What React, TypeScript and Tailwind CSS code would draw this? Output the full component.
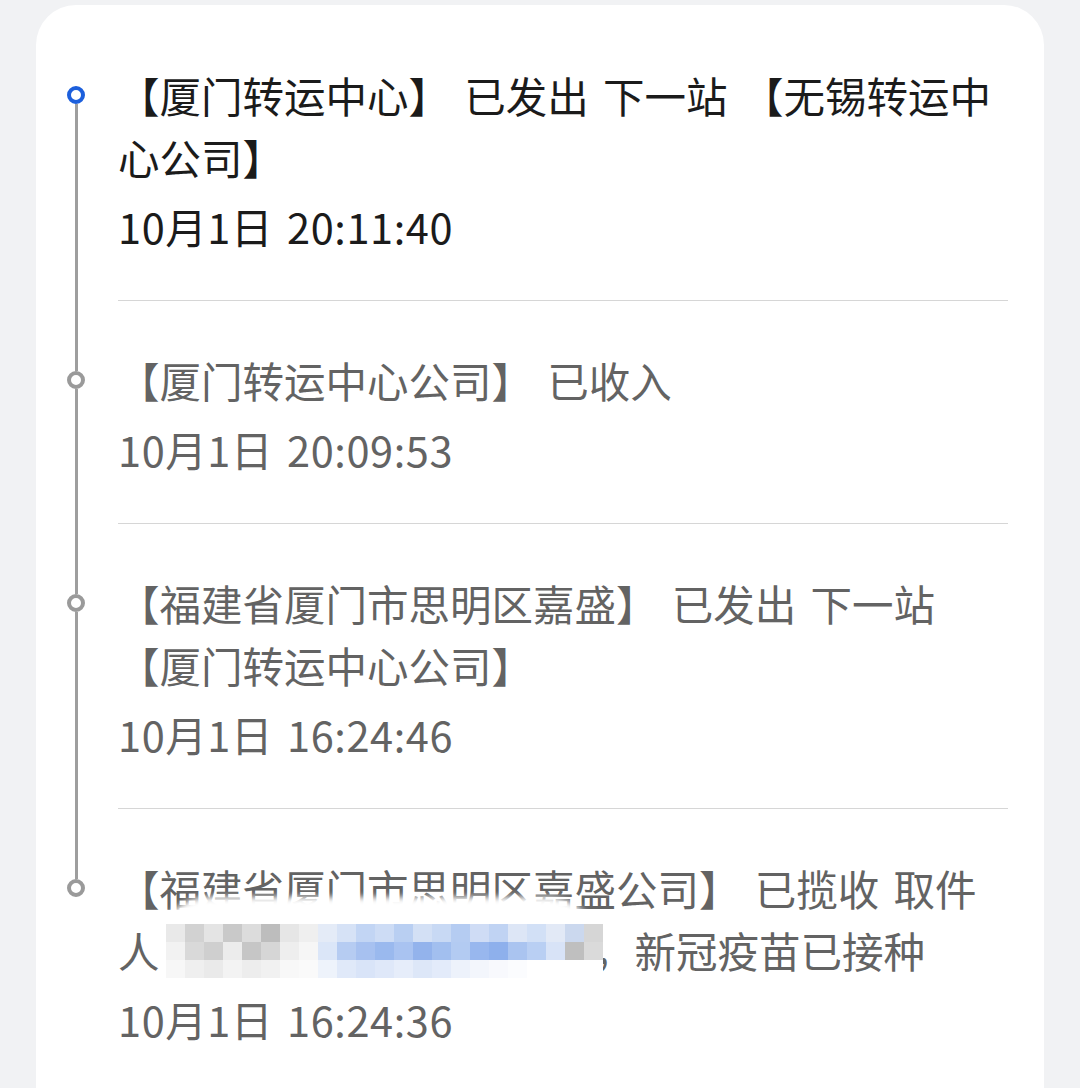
import React from "react";

type Item = {
  lines: React.ReactNode[];
  date: string;
  active?: boolean;
  hidden?: boolean;
};

const rowA = ["#e9e9e9","#d2d2d2","#e4e4e4","#c9c9c9","#dcdcdc","#bdbdbd","#e6e6e6","#efefef","#e4ebf7","#d6e2f6","#c2d5f4","#cddcf5","#b9cff2","#d3e0f5","#c8d9f4","#b5ccf2","#cfdcf5","#c0d3f3","#dde6f6","#d2e0f6","#e2e9f6","#cbd8ee","#d6d6d6"];
const rowB = ["#f2f2f2","#d9d9d9","#cfcfcf","#ececec","#c6c6c6","#d6d6d6","#eeeeee","#f6f6f6","#dbe6f8","#b6ccf2","#a7c1f0","#9ab9ee","#a9c3f1","#93b3ec","#a2bfef","#b3cbf2","#98b7ee","#8eb0ec","#aac4f0","#b9cff3","#d8e3f7","#bfbfbf","#dadada"];
const rowC = ["#f7f7f7","#efefef","#eaeaea","#f3f3f3","#ededed","#f1f1f1","#f8f8f8","#fafafa","#eef3fb","#e0e9f9","#d9e4f8","#dfe8f9","#e6edfa","#dde7f8","#e3ebfa","#edf2fb","#f3f6fc","#f8f9fd","#fbfcfe","#ffffff","#ffffff","#ffffff","#ffffff"];

function Mosaic() {
  return (
    <div className="pointer-events-none absolute left-[40px] top-[78px] w-[480px] h-[120px]">
      <div className="absolute left-0 top-[10px] w-[440px] h-[100px] rounded-[60px] bg-white blur-[3px]" />
      <div className="absolute left-[8px] top-[37px] flex flex-col">
        {[rowA, rowB, rowC].map((row, r) => (
          <div key={r} className="flex">
            {row.map((c, i) => (
              <div key={i} className="w-[19px] h-[18px]" style={{ backgroundColor: c }} />
            ))}
          </div>
        ))}
      </div>
    </div>
  );
}

const items: Item[] = [
  {
    lines: ["【厦门转运中心】 已发出 下一站 【无锡转运中", "心公司】"],
    date: "10月1日 20:11:40",
    active: true,
  },
  { lines: ["【厦门转运中心公司】 已收入"], date: "10月1日 20:09:53" },
  {
    lines: ["【福建省厦门市思明区嘉盛】 已发出 下一站", "【厦门转运中心公司】"],
    date: "10月1日 16:24:46",
  },
  {
    lines: [
      "【福建省厦门市思明区嘉盛公司】 已揽收 取件",
      <>
        人：<span className="inline-block w-[392px]" />，新冠疫苗已接种
      </>,
    ],
    date: "10月1日 16:24:36",
    hidden: true,
  },
];

export default function App() {
  return (
    <div className="h-[1088px] overflow-hidden bg-[#f1f2f4] px-[36px] pt-[5px] font-['Noto_Sans_CJK_SC','Noto_Sans',sans-serif]">
      <div className="flex h-[1130px] flex-col rounded-[40px] bg-white pt-[11px] pr-[36px]">
        {items.map((it, idx) => {
          const first = idx === 0;
          const last = idx === items.length - 1;
          const color = it.active ? "text-[#1b1b1b]" : "text-[#636363]";
          return (
            <div key={idx} className="flex">
              <div className="flex w-[82px] shrink-0 flex-col items-center pr-[2px]">
                <div className={first ? "h-[70px] w-[3px]" : "h-[70px] w-[3px] bg-[#9e9e9e]"} />
                <div
                  className={
                    it.active
                      ? "h-[18px] w-[18px] shrink-0 rounded-full border-[4px] border-[#1c5fdc] bg-white"
                      : "h-[18px] w-[18px] shrink-0 rounded-full border-[4px] border-[#9a9a9a] bg-white"
                  }
                />
                <div className={last ? "w-[3px] flex-1" : "w-[3px] flex-1 bg-[#9e9e9e]"} />
              </div>
              <div
                className={
                  last
                    ? "relative flex flex-1 flex-col gap-[7px] pt-[48px] pb-[43px]"
                    : "relative flex flex-1 flex-col gap-[7px] border-b border-[#d6d6d6] pt-[48px] pb-[43px]"
                }
              >
                <div className={`text-[41.5px] leading-[62px] whitespace-pre [word-spacing:5px] ${color}`}>
                  {it.lines.map((l, i) => (
                    <div key={i}>{l}</div>
                  ))}
                </div>
                <div className={`text-[41.5px] leading-[62px] whitespace-pre tracking-[0.6px] [word-spacing:4px] ${color}`}>
                  {it.date}
                </div>
                {it.hidden && <Mosaic />}
              </div>
            </div>
          );
        })}
      </div>
    </div>
  );
}
